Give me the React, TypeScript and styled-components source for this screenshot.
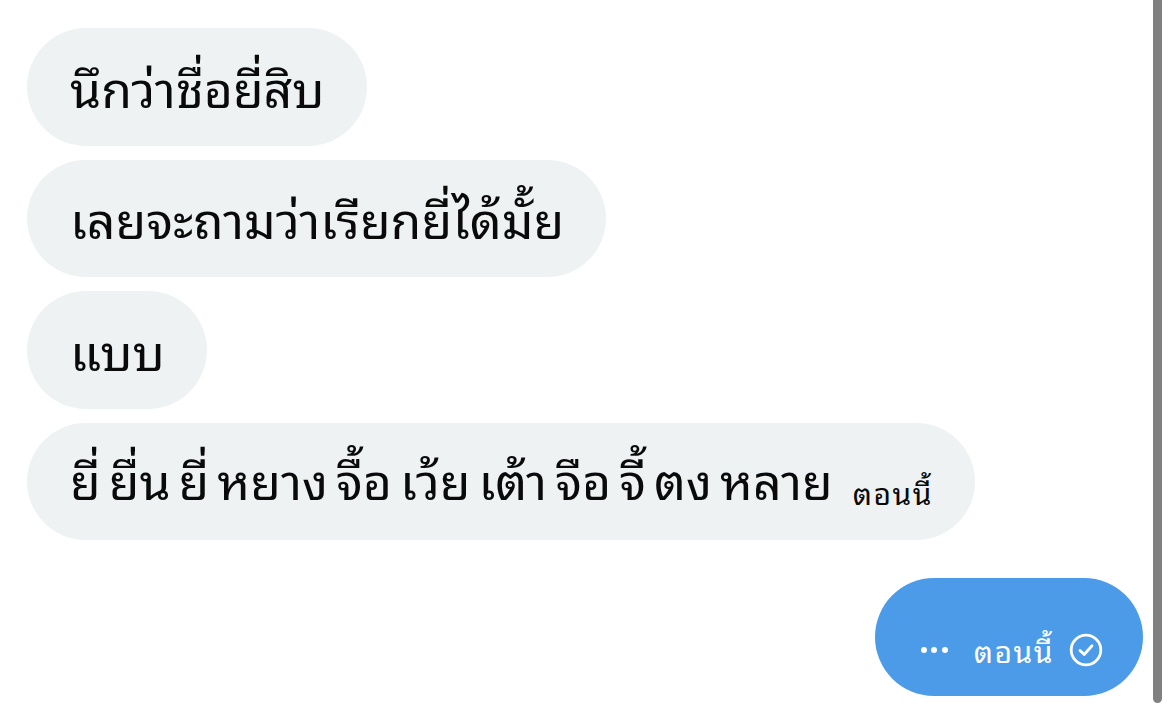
import React from "react";
import styled, { createGlobalStyle } from "styled-components";

const Global = createGlobalStyle`
  html, body { margin: 0; padding: 0; background: #ffffff; }
  body { font-family: "Noto Sans Thai Looped", "Noto Sans Thai", "Noto Sans", sans-serif; }
`;

const Page = styled.div`
  position: relative;
  width: 1170px;
  height: 713px;
  overflow: hidden;
  background: #ffffff;
  box-sizing: border-box;
  padding: 28px 27px 0 27px;
`;

const Thread = styled.div`
  display: flex;
  flex-direction: column;
  align-items: flex-start;
  gap: 14px;
`;

const Bubble = styled.div<{ $mine?: boolean }>`
  box-sizing: border-box;
  height: 117.5px;
  border-radius: 59px;
  padding: ${(p) => (p.$mine ? "0 40px 0 46px" : "0 42px 0 43px")};
  display: flex;
  align-items: center;
  background: ${(p) => (p.$mine ? "#4b9be8" : "#eff2f3")};
  color: ${(p) => (p.$mine ? "#ffffff" : "#0a0a0a")};
  align-self: ${(p) => (p.$mine ? "flex-end" : "flex-start")};
  margin-top: ${(p) => (p.$mine ? "24px" : "0")};
`;

const Text = styled.span`
  font-size: 50px;
  line-height: 1;
  white-space: nowrap;
  word-spacing: -5px;
  padding-bottom: 2px;
`;

const Time = styled.span<{ $mine?: boolean }>`
  font-size: 30px;
  letter-spacing: 1.5px;
  word-spacing: 0;
  line-height: 1;
  white-space: nowrap;
  color: ${(p) => (p.$mine ? "#ffffff" : "#0a0a0a")};
  margin-left: ${(p) => (p.$mine ? "0" : "20px")};
  vertical-align: ${(p) => (p.$mine ? "baseline" : "-5px")};
`;

const Meta = styled.div`
  display: flex;
  align-items: center;
  gap: 15px;
  padding-top: 26px;
`;

const Dots = styled.span`
  display: flex;
  gap: 4.5px;
  margin-right: 11px;
`;

const Dot = styled.span`
  width: 6px;
  height: 6px;
  border-radius: 50%;
  background: #ffffff;
`;

const Scrollbar = styled.div`
  position: absolute;
  top: 0;
  right: 8px;
  width: 9px;
  height: 703px;
  background: #808080;
  border-radius: 0 0 5px 5px;
`;

const Check = () => (
  <svg width="34" height="34" viewBox="0 0 34 34" fill="none">
    <circle cx="17" cy="17" r="14.8" stroke="#ffffff" strokeWidth="2.8" />
    <path d="M11 17.5 L15.2 21.5 L23 12.8" stroke="#ffffff" strokeWidth="2.8" strokeLinecap="round" strokeLinejoin="round" />
  </svg>
);

export default function App() {
  return (
    <>
      <Global />
      <Page>
        <Thread>
          <Bubble>
            <Text>นึกว่าชื่อยี่สิบ</Text>
          </Bubble>
          <Bubble>
            <Text>เลยจะถามว่าเรียกยี่ได้มั้ย</Text>
          </Bubble>
          <Bubble>
            <Text>แบบ</Text>
          </Bubble>
          <Bubble>
            <Text>
              ยี่ ยื่น ยี่ หยาง จื้อ เว้ย เต้า จือ จี้ ตง หลาย
              <Time>ตอนนี้</Time>
            </Text>
          </Bubble>
          <Bubble $mine>
            <Meta>
              <Dots>
                <Dot />
                <Dot />
                <Dot />
              </Dots>
              <Time $mine>ตอนนี้</Time>
              <Check />
            </Meta>
          </Bubble>
        </Thread>
        <Scrollbar />
      </Page>
    </>
  );
}
